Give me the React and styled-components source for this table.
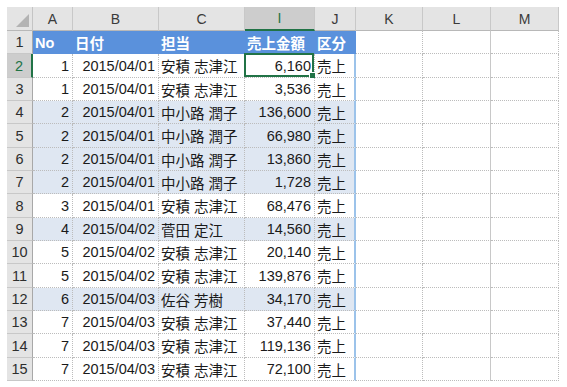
import React from "react";
import styled, { createGlobalStyle, css } from "styled-components";

const Global = createGlobalStyle`
  html, body { margin: 0; padding: 0; background: #fff; }
  body { font-family: "Liberation Sans", "Noto Sans CJK JP", sans-serif; }
`;

const Page = styled.div`
  padding: 7px 0 0 7px;
`;

const Sheet = styled.div`
  display: grid;
  grid-template-columns: 26px 40px 86px 86px 70px 41px 67px 68px 68px;
  grid-template-rows: 24px repeat(5, 23px 24px 23px);
  width: max-content;
  font-size: 14.5px;
  color: #1a1a1a;
`;

const Corner = styled.div`
  background: #e4e4e4;
  border-right: 1px solid #c4c4c4;
  border-bottom: 1px solid #b8b8b8;
  display: flex;
  align-items: flex-end;
  justify-content: flex-end;
  padding: 0 3px 3px 0;
  box-sizing: border-box;
`;

const ColHead = styled.div`
  box-sizing: border-box;
  background: ${(p) => (p.$active ? "#cdcdcd" : "#e4e4e4")};
  border-right: 1px solid #c8c8c8;
  border-bottom: ${(p) => (p.$active ? "2px solid #217346" : "1px solid #b8b8b8")};
  display: flex;
  align-items: center;
  justify-content: center;
  color: ${(p) => (p.$active ? "#217346" : "#3a3a3a")};
  font-size: 14px;
`;

const RowHead = styled.div`
  box-sizing: border-box;
  background: ${(p) => (p.$active ? "#cdcdcd" : "#e4e4e4")};
  border-right: ${(p) => (p.$active ? "2px solid #217346" : "1px solid #a8a8a8")};
  border-bottom: 1px solid #c8c8c8;
  display: flex;
  align-items: center;
  justify-content: center;
  color: ${(p) => (p.$active ? "#217346" : "#2e2e2e")};
  font-size: 14.5px;
`;

const Cell = styled.div`
  box-sizing: border-box;
  position: relative;
  display: flex;
  align-items: center;
  justify-content: ${(p) => (p.$align === "right" ? "flex-end" : "flex-start")};
  padding: 0 3px 0 2px;
  white-space: nowrap;
  border-right: 1px dotted #bcbcbc;
  border-bottom: 1px dotted #bcbcbc;
  ${(p) =>
    p.$band &&
    css`
      background: #dfe7f2;
    `}
  ${(p) =>
    p.$head &&
    css`
      background: #5a91dc;
      color: #ffffff;
      font-weight: bold;
      border-right: none;
      border-bottom: none;
    `}
  ${(p) =>
    p.$tableEdge &&
    css`
      border-right: 2px solid #9cc3ea;
    `}
  ${(p) =>
    p.$solid &&
    css`
      border-right: 1px solid #c8c8c8;
    `}
`;

const Selection = styled.div`
  position: absolute;
  top: -1px;
  left: -1px;
  right: 0;
  bottom: 0;
  border: 2px solid #217346;
  pointer-events: none;
`;

const FillHandle = styled.div`
  position: absolute;
  right: -4px;
  bottom: -4px;
  width: 5px;
  height: 5px;
  background: #217346;
  border: 1px solid #ffffff;
`;

const cols = ["A", "B", "C", "I", "J", "K", "L", "M"];

const data = [
  [1, "2015/04/01", "安積 志津江", "6,160"],
  [1, "2015/04/01", "安積 志津江", "3,536"],
  [2, "2015/04/01", "中小路 潤子", "136,600"],
  [2, "2015/04/01", "中小路 潤子", "66,980"],
  [2, "2015/04/01", "中小路 潤子", "13,860"],
  [2, "2015/04/01", "中小路 潤子", "1,728"],
  [3, "2015/04/01", "安積 志津江", "68,476"],
  [4, "2015/04/02", "菅田 定江", "14,560"],
  [5, "2015/04/02", "安積 志津江", "20,140"],
  [5, "2015/04/02", "安積 志津江", "139,876"],
  [6, "2015/04/03", "佐谷 芳樹", "34,170"],
  [7, "2015/04/03", "安積 志津江", "37,440"],
  [7, "2015/04/03", "安積 志津江", "119,136"],
  [7, "2015/04/03", "安積 志津江", "72,100"],
];

const banded = new Set([4, 5, 6, 7, 9, 12]);

function CornerTriangle() {
  return (
    <svg width="13" height="13" viewBox="0 0 13 13">
      <polygon points="13,0 13,13 0,13" fill="#b3b3b3" />
    </svg>
  );
}

export default function App() {
  return (
    <>
      <Global />
      <Page>
        <Sheet>
          <Corner>
            <CornerTriangle />
          </Corner>
          {cols.map((c) => (
            <ColHead key={c} $active={c === "I"}>
              {c}
            </ColHead>
          ))}

          <RowHead>1</RowHead>
          <Cell $head>No</Cell>
          <Cell $head>日付</Cell>
          <Cell $head>担当</Cell>
          <Cell $head>売上金額</Cell>
          <Cell $head>区分</Cell>
          <Cell />
          <Cell $solid />
          <Cell />

          {data.map((r, i) => {
            const rowNo = i + 2;
            const band = banded.has(rowNo);
            return (
              <React.Fragment key={rowNo}>
                <RowHead $active={rowNo === 2}>{rowNo}</RowHead>
                <Cell $band={band} $align="right">{r[0]}</Cell>
                <Cell $band={band} $align="right">{r[1]}</Cell>
                <Cell $band={band}>{r[2]}</Cell>
                <Cell $band={band} $align="right">
                  {r[3]}
                  {rowNo === 2 && (
                    <Selection>
                      <FillHandle />
                    </Selection>
                  )}
                </Cell>
                <Cell $band={band} $tableEdge>売上</Cell>
                <Cell />
                <Cell $solid />
                <Cell />
              </React.Fragment>
            );
          })}
        </Sheet>
      </Page>
    </>
  );
}
